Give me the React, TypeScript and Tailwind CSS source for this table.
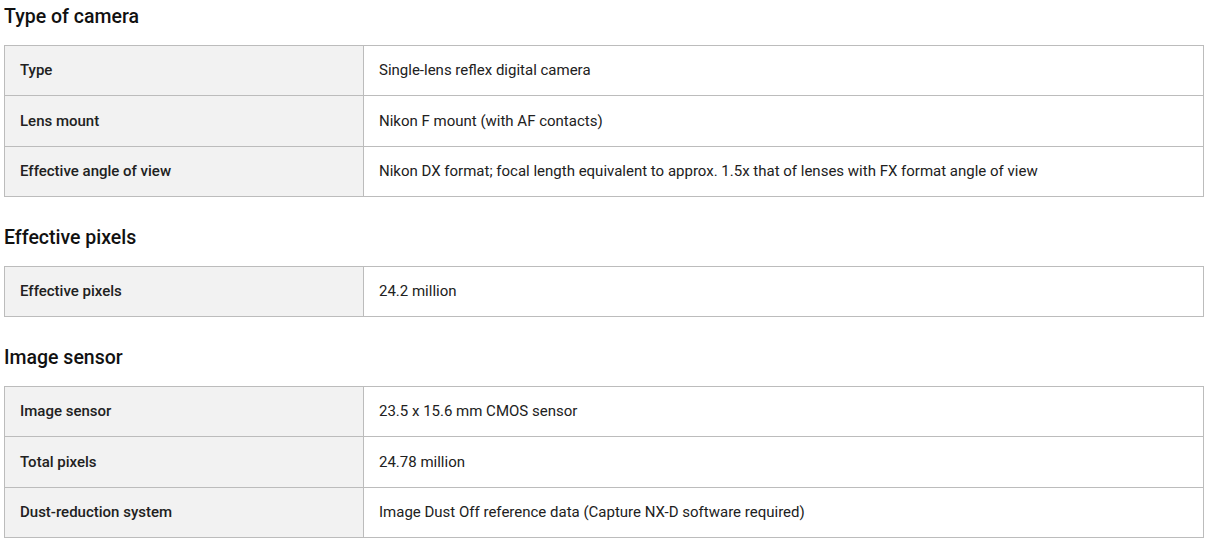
import React from "react";

type Row = [string, string];
const sections: { title: string; rows: Row[] }[] = [
  {
    title: "Type of camera",
    rows: [
      ["Type", "Single-lens reflex digital camera"],
      ["Lens mount", "Nikon F mount (with AF contacts)"],
      [
        "Effective angle of view",
        "Nikon DX format; focal length equivalent to approx. 1.5x that of lenses with FX format angle of view",
      ],
    ],
  },
  {
    title: "Effective pixels",
    rows: [["Effective pixels", "24.2 million"]],
  },
  {
    title: "Image sensor",
    rows: [
      ["Image sensor", "23.5 x 15.6 mm CMOS sensor"],
      ["Total pixels", "24.78 million"],
      ["Dust-reduction system", "Image Dust Off reference data (Capture NX-D software required)"],
    ],
  },
];

const rowClass = (j: number) =>
  j === 0
    ? "flex h-[49px]"
    : j === 1
    ? "flex h-[51px] border-t border-[#bcbcbc]"
    : "flex h-[50px] border-t border-[#bcbcbc]";

export default function App() {
  return (
    <div className="min-h-[556px] w-[1213px] bg-white font-['Roboto',sans-serif] text-[#212121]">
      {sections.map((s, i) => (
        <div key={s.title} className={i === 0 ? "" : "mt-[24px]"}>
          <h2 className="ml-1 h-8 text-[19.5px] font-medium leading-[34px] text-[#111]">{s.title}</h2>
          <div className="ml-1 mt-[13px] w-[1200px] border border-[#bcbcbc]">
            {s.rows.map(([k, v], j) => (
              <div key={k} className={rowClass(j)}>
                <div className="flex w-[359px] items-center border-r border-[#bcbcbc] bg-[#f2f2f2] pl-[15px] text-[15px] font-medium">
                  {k}
                </div>
                <div className="flex flex-1 items-center pl-[15px] text-[15px]">{v}</div>
              </div>
            ))}
          </div>
        </div>
      ))}
    </div>
  );
}
